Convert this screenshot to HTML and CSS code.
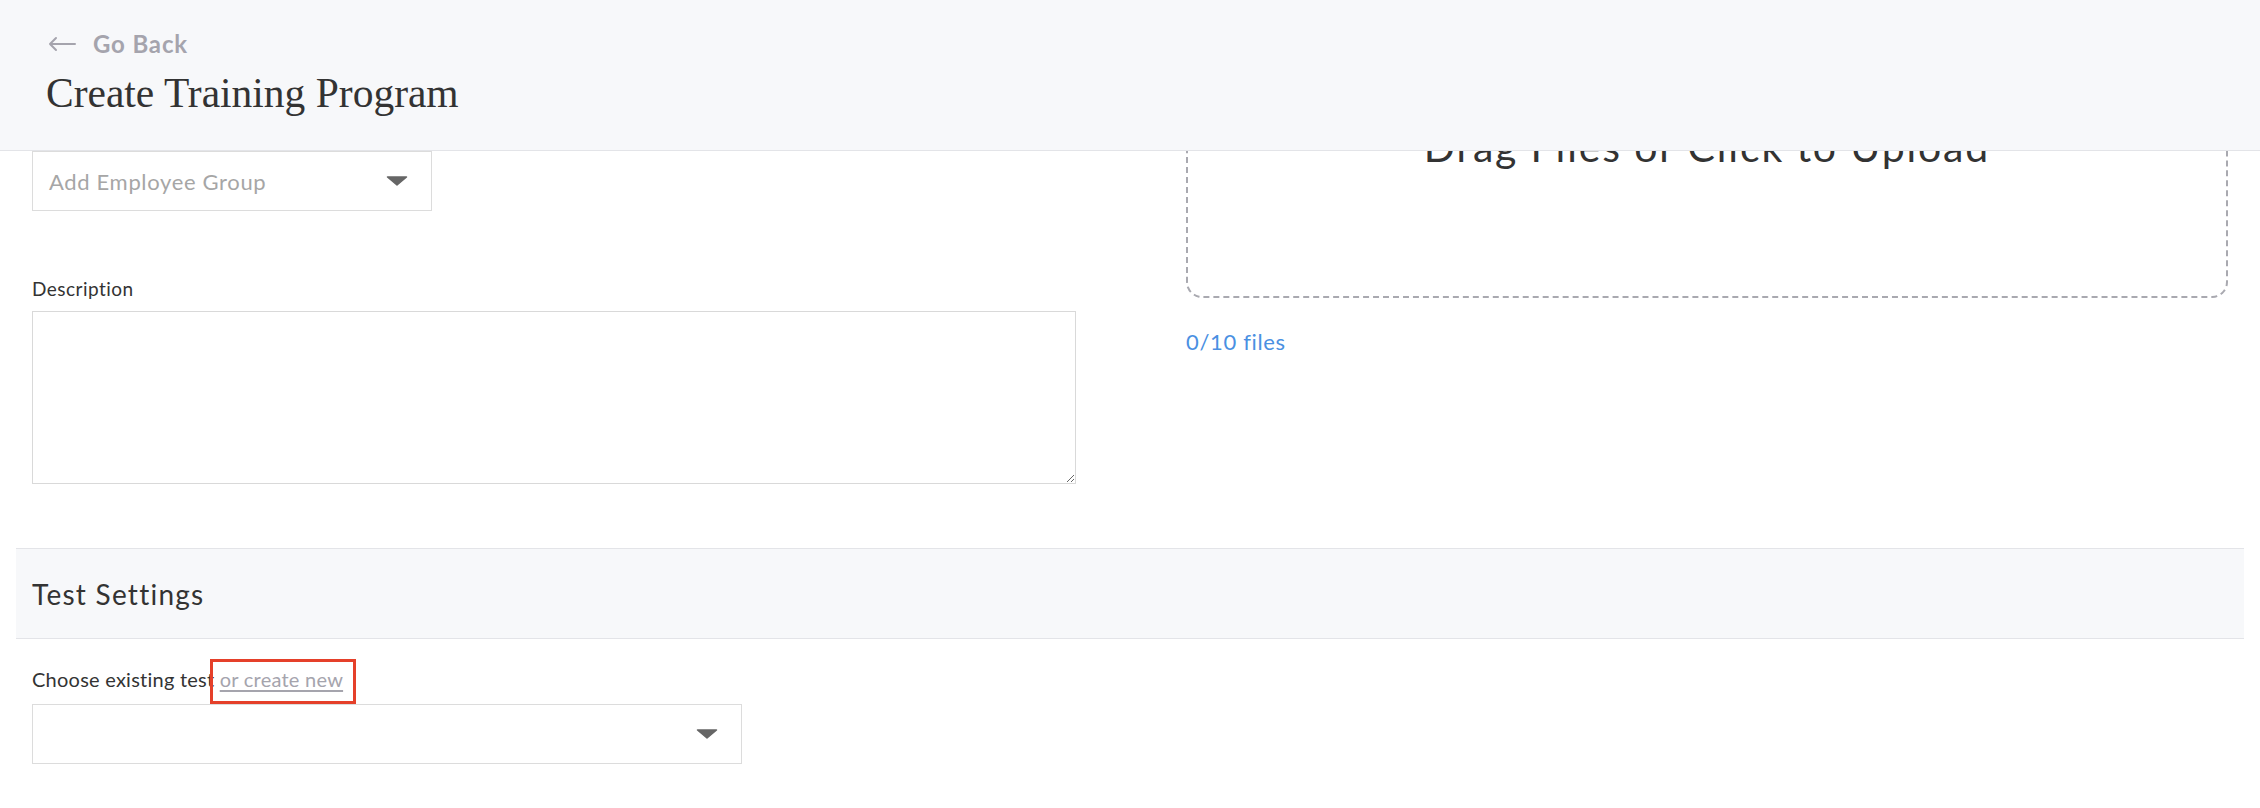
FILE: index.html
```html
<!DOCTYPE html>
<html lang="en">
<head>
<meta charset="utf-8">
<title>Create Training Program</title>
<link rel="stylesheet" href="styles.css">
</head>
<body>
<header class="topbar">
  <a class="back" href="#">
    <svg class="back-arrow" width="28" height="16" viewBox="0 0 28 16" aria-hidden="true">
      <path d="M27 8 H2 M8 2 L2 8 L8 14" fill="none" stroke="#a5a4ad" stroke-width="2" stroke-linecap="round" stroke-linejoin="round"/>
    </svg>
    <span>Go Back</span>
  </a>
  <h1 class="title">Create Training Program</h1>
</header>

<main class="page">
  <div class="columns">
    <div class="col">
      <div class="select first">
        <span class="placeholder">Add Employee Group</span>
        <svg class="caret" width="22" height="10" viewBox="0 0 22 10" aria-hidden="true"><polygon points="1.5,1 20.5,1 11,9" fill="#666" stroke="#666" stroke-width="1.5" stroke-linejoin="round"/></svg>
      </div>
      <div class="label desc-label">Description</div>
      <textarea class="textarea"></textarea>
    </div>
    <div class="col">
      <div class="dropzone"><span>Drag Files or Click to Upload</span></div>
      <div class="files">0/10 files</div>
    </div>
  </div>

  <section class="section-head">
    <h2>Test Settings</h2>
  </section>

  <div class="test-body">
    <div class="label choose">Choose existing test <a class="create" href="#">or create new</a></div>
    <div class="select wide">
      <span class="placeholder"></span>
      <svg class="caret" width="22" height="10" viewBox="0 0 22 10" aria-hidden="true"><polygon points="1.5,1 20.5,1 11,9" fill="#666" stroke="#666" stroke-width="1.5" stroke-linejoin="round"/></svg>
    </div>
  </div>
</main>
</body>
</html>
```

FILE: styles.css
```css
* { box-sizing: border-box; }

html, body {
  margin: 0;
  padding: 0;
  background: #ffffff;
  font-family: Lato, "Open Sans", "Liberation Sans", sans-serif;
  color: #333333;
  overflow: hidden;
}

.topbar {
  position: fixed;
  top: 0;
  left: 0;
  right: 0;
  height: 151px;
  background: #f7f8fa;
  border-bottom: 1px solid #e3e4e8;
  padding: 29px 0 0 46px;
  z-index: 10;
}

.back {
  display: flex;
  align-items: center;
  gap: 17px;
  padding-left: 2px;
  color: #a5a4ad;
  text-decoration: none;
  font-weight: 700;
  font-size: 24px;
  letter-spacing: 0.035em;
  line-height: 30px;
}

.back-arrow { display: block; }

.title {
  margin: 9px 0 0 0;
  font-family: "Liberation Serif", "DejaVu Serif", serif;
  font-weight: 400;
  font-size: 41.5px;
  line-height: 50px;
  color: #333333;
}

.page {
  padding: 110px 16px 0 16px;
}

.columns {
  display: grid;
  grid-template-columns: 1044px 1042px;
  column-gap: 110px;
  padding: 0 16px;
}

.col {
  display: flex;
  flex-direction: column;
  align-items: flex-start;
}

.label {
  font-size: 19px;
  line-height: 24px;
  letter-spacing: 0.025em;
  color: #333333;
}

.select {
  display: flex;
  align-items: center;
  justify-content: space-between;
  width: 400px;
  height: 60px;
  border: 1px solid #dcdcdc;
  background: #ffffff;
  padding: 0 23px 0 16px;
}

.select.first { margin-top: 41px; }

.select.wide { width: 710px; }

.placeholder {
  font-size: 22px;
  letter-spacing: 0.03em;
  color: #a6a6a6;
}

.caret { display: block; }

.desc-label {
  margin-top: 66px;
  margin-bottom: 10px;
}

.textarea {
  display: block;
  width: 1044px;
  height: 173px;
  border: 1px solid #d9d9d9;
  border-radius: 0;
  resize: both;
  margin: 0;
  font-family: inherit;
}

.dropzone {
  width: 100%;
  height: 188px;
  border: 2px dashed #a9a9b0;
  border-radius: 16px;
  display: flex;
  justify-content: center;
  padding-top: 11px;
  font-size: 41px;
  line-height: 48px;
  letter-spacing: 0.045em;
  color: #333333;
}

.files {
  margin-top: 30px;
  font-size: 22px;
  line-height: 28px;
  letter-spacing: 0.03em;
  color: #4a90e2;
}

.section-head {
  margin-top: 64px;
  height: 91px;
  background: #f7f8fa;
  border-top: 1px solid #e3e4e8;
  border-bottom: 1px solid #e3e4e8;
  display: flex;
  align-items: center;
  padding-left: 16px;
}

.section-head h2 {
  margin: 0;
  font-weight: 400;
  font-size: 28px;
  line-height: 34px;
  letter-spacing: 0.045em;
  color: #333333;
}

.test-body {
  padding: 28px 16px 0 16px;
}

.choose {
  font-size: 20px;
  letter-spacing: 0.012em;
  margin-bottom: 13px;
}

.create {
  position: relative;
  color: #a5a4ad;
  text-decoration: underline;
  text-underline-offset: 3px;
}

.create::after {
  content: "";
  position: absolute;
  left: -10px;
  right: -13px;
  top: -8px;
  bottom: -13px;
  border: 3px solid #e5402a;
}
```
